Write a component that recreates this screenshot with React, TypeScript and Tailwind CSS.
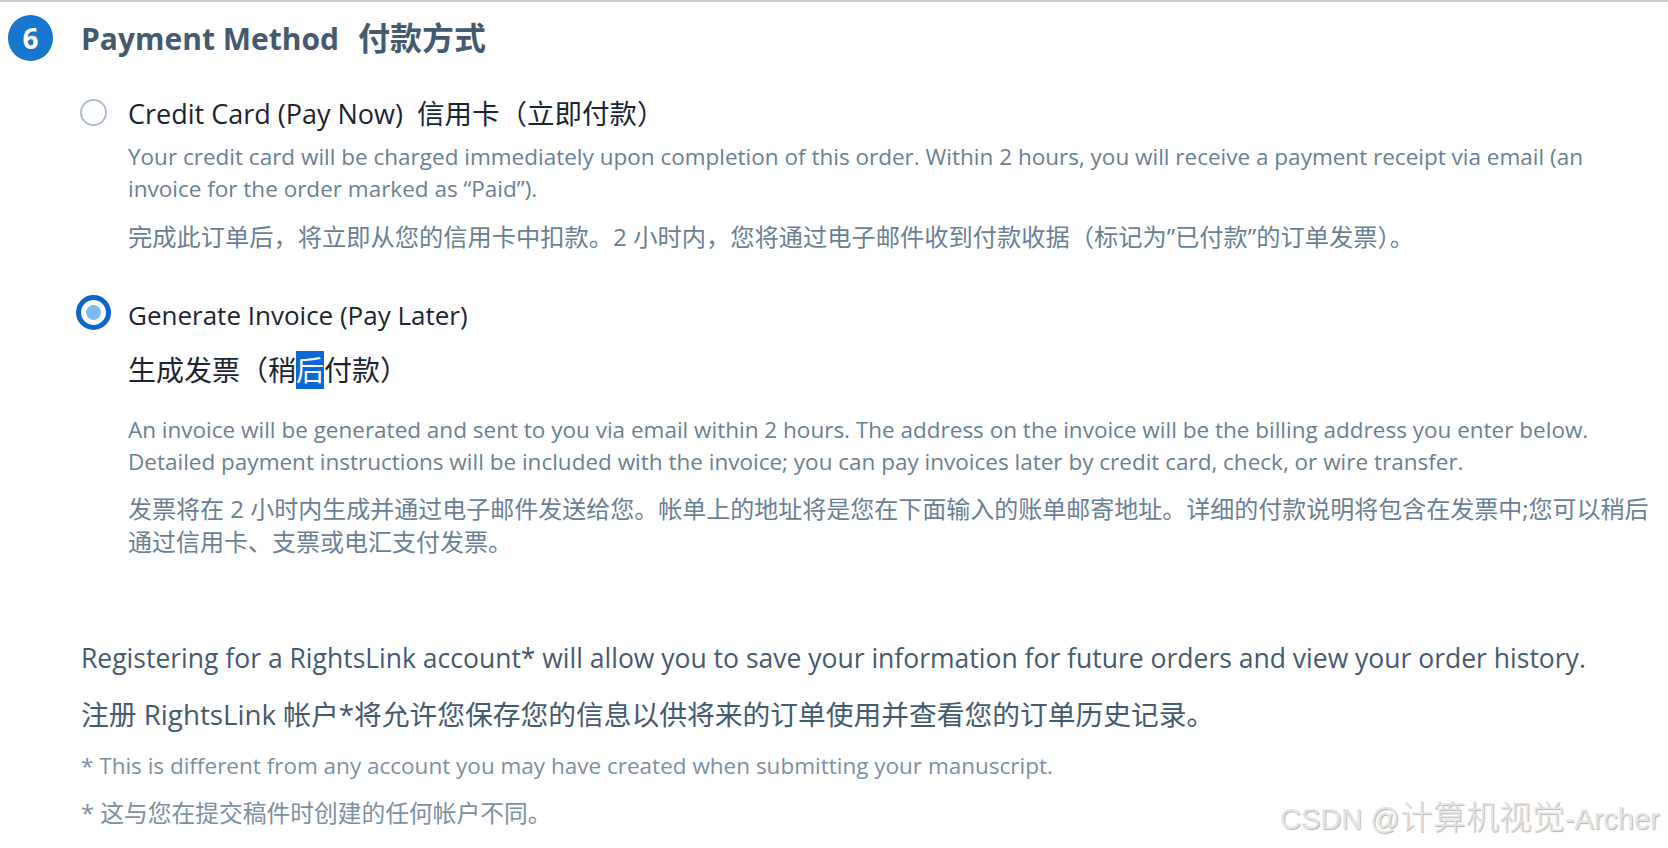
import { useState } from "react";

function Radio({ checked, onClick }: { checked: boolean; onClick: () => void }) {
    if (checked) {
        return (
            <button
                type="button"
                onClick={onClick}
                className="w-[35px] h-[35px] shrink-0 rounded-full border-[5px] border-[#0b66c9] bg-white flex items-center justify-center"
            >
                <span className="w-[15px] h-[15px] rounded-full bg-[#7cbbec]" />
            </button>
        )
    }
    return (
        <button
            type="button"
            onClick={onClick}
            className="w-[27px] h-[27px] shrink-0 rounded-full border-2 border-[#aebccb] bg-white"
        />
    )
}

function App() {
    const [method, setMethod] = useState<"card" | "invoice">("invoice")

    return (
        <div className="relative min-h-screen bg-white border-t-2 border-[#c9d0d7] font-['Open_Sans','Noto_Sans_CJK_SC',sans-serif] overflow-hidden">
            {/* section header */}
            <div className="flex items-center gap-[28px] pl-[8px] pt-[13px]">
                <div className="w-[45px] h-[46px] rounded-full bg-[#1777cc] text-white flex items-center justify-center text-[28px] font-bold leading-none">
                    6
                </div>
                <h2 className="text-[30px] leading-[40px] font-bold text-[#465a6f]">
                    Payment Method<span className="ml-[19px] text-[32px]">付款方式</span>
                </h2>
            </div>

            <div className="pl-[80px] pr-[14px]">
                {/* credit card */}
                <div className="flex items-start gap-[21px] mt-[35px]">
                    <div className="pt-[3px]">
                        <Radio checked={method === "card"} onClick={() => setMethod("card")} />
                    </div>
                    <div className="flex-1">
                        <div className="text-[27px] leading-[36px] text-[#1b2431]">
                            Credit Card (Pay Now)<span className="ml-[14px] text-[27.5px]">信用卡（立即付款）</span>
                        </div>
                        <p className="mt-[9px] text-[22.5px] leading-[32px] text-[#6a7f94]">
                            Your credit card will be charged immediately upon completion of this order. Within 2 hours, you will receive a payment receipt via email (an invoice for the order marked as “Paid”).
                        </p>
                        <p className="mt-[16px] text-[24.25px] leading-[32px] text-[#6a7f94]">
                            完成此订单后，将立即从您的信用卡中扣款。2 小时内，您将通过电子邮件收到付款收据（标记为”已付款”的订单发票）。
                        </p>
                    </div>
                </div>

                {/* invoice */}
                <div className="flex items-start gap-[17px] mt-[44px] -ml-[4px]">
                    <div className="-mt-[2px]">
                        <Radio checked={method === "invoice"} onClick={() => setMethod("invoice")} />
                    </div>
                    <div className="flex-1">
                        <div className="text-[26px] leading-[36px] text-[#1b2431]">
                            Generate Invoice (Pay Later)
                        </div>
                        <div className="mt-[17px] text-[28px] leading-[40px] text-[#1b2431]">
                            生成发票（稍<span className="bg-[#0a69d2] text-white">后</span>付款）
                        </div>
                        <p className="mt-[24px] text-[22.5px] leading-[32px] text-[#6a7f94]">
                            An invoice will be generated and sent to you via email within 2 hours. The address on the invoice will be the billing address you enter below. Detailed payment instructions will be included with the invoice; you can pay invoices later by credit card, check, or wire transfer.
                        </p>
                        <p className="mt-[14px] text-[24px] leading-[33px] text-[#6a7f94]">
                            发票将在 2 小时内生成并通过电子邮件发送给您。帐单上的地址将是您在下面输入的账单邮寄地址。详细的付款说明将包含在发票中;您可以稍后通过信用卡、支票或电汇支付发票。
                        </p>
                    </div>
                </div>
            </div>

            {/* account note */}
            <div className="pl-[81px] pr-[14px] mt-[80px] text-[#465a6f]">
                <p className="text-[26.5px] leading-[40px]">
                    Registering for a RightsLink account* will allow you to save your information for future orders and view your order history.
                </p>
                <p className="mt-[16px] text-[27.75px] leading-[40px]">
                    注册 RightsLink 帐户*将允许您保存您的信息以供将来的订单使用并查看您的订单历史记录。
                </p>
                <p className="mt-[16px] text-[22.5px] leading-[32px] text-[#7d8fa2]">
                    * This is different from any account you may have created when submitting your manuscript.
                </p>
                <p className="mt-[15px] text-[23.75px] leading-[32px] text-[#7d8fa2]">
                    * 这与您在提交稿件时创建的任何帐户不同。
                </p>
            </div>

            {/* watermark */}
            <div className="absolute left-[1280px] top-[796px] whitespace-nowrap font-['Liberation_Sans','Noto_Sans_CJK_SC',sans-serif] text-[29px] leading-[40px] text-[#e4e4e4] [text-shadow:1px_1px_1px_#b4b4b4]">
                CSDN @<span className="text-[33px] font-light">计算机视觉</span>-Archer
            </div>
        </div>
    )
}

export default App
